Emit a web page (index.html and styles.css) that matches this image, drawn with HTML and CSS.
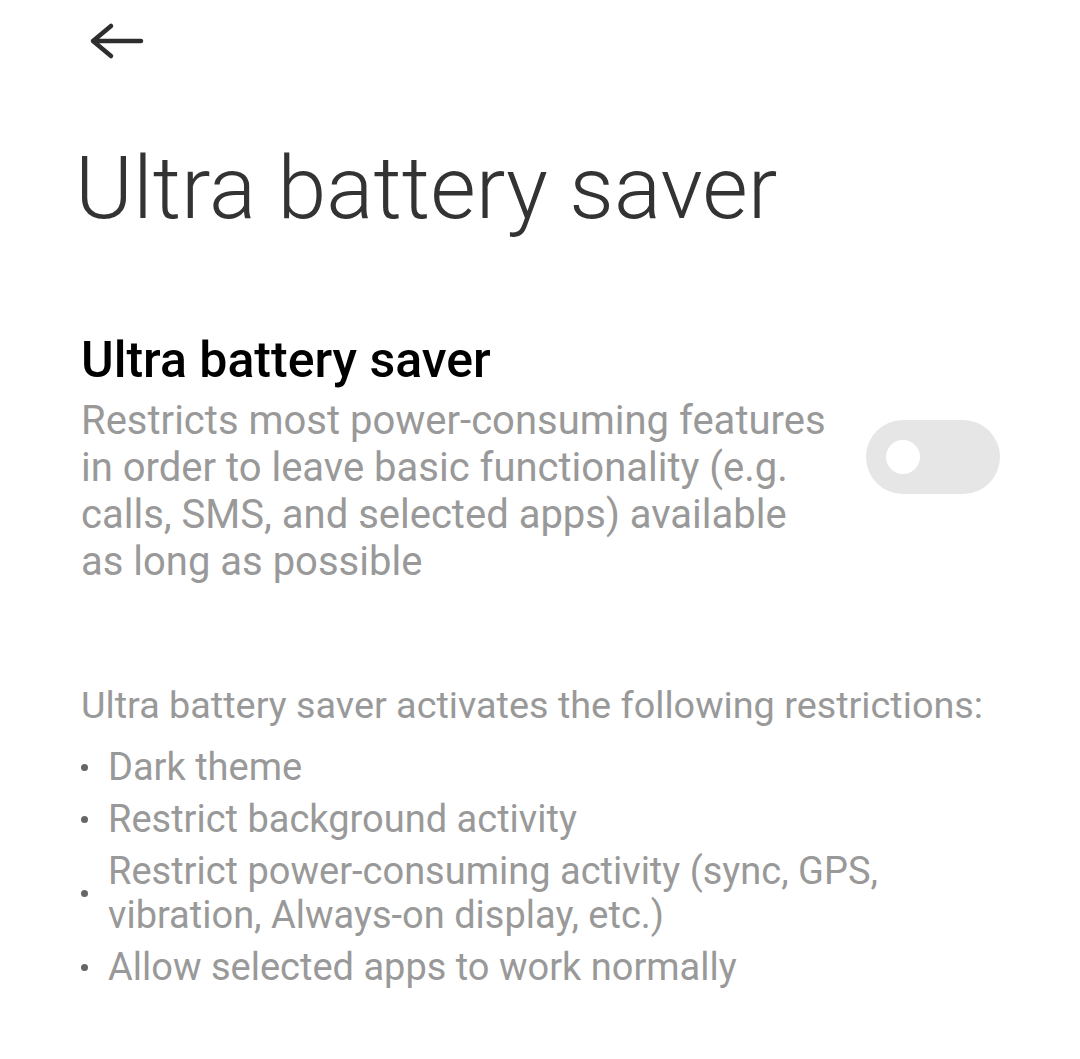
FILE: index.html
```html
<!DOCTYPE html>
<html>
<head>
<meta charset="utf-8">
<link rel="stylesheet" href="styles.css">
</head>
<body>
<div class="page">
  <header class="topbar">
    <svg class="back" width="60" height="40" viewBox="0 0 60 40">
      <path d="M26 5 L8 20 L26 35 M8 20 H56" fill="none" stroke="#2e2e2e" stroke-width="4.5" stroke-linecap="round" stroke-linejoin="round"/>
    </svg>
  </header>
  <h1 class="title">Ultra battery saver</h1>
  <section class="setting">
    <div class="setting-text">
      <h2 class="setting-name">Ultra battery saver</h2>
      <p class="setting-desc">Restricts most power-consuming features in order to leave basic functionality (e.g. calls, SMS, and selected apps) available as long as possible</p>
    </div>
    <div class="toggle"><span class="knob"></span></div>
  </section>
  <section class="info">
    <p class="info-head">Ultra battery saver activates the following restrictions:</p>
    <ul class="list">
      <li class="item"><span class="dot"></span><span class="item-text">Dark theme</span></li>
      <li class="item"><span class="dot"></span><span class="item-text">Restrict background activity</span></li>
      <li class="item"><span class="dot"></span><span class="item-text">Restrict power-consuming activity (sync, GPS,<br>vibration, Always-on display, etc.)</span></li>
      <li class="item"><span class="dot"></span><span class="item-text">Allow selected apps to work normally</span></li>
    </ul>
  </section>
</div>
</body>
</html>
```
FILE: styles.css
```css
* { box-sizing: border-box; }
html, body { margin: 0; padding: 0; background: #fff; }
body { font-family: Roboto, "Noto Sans", sans-serif; width: 1080px; height: 1059px; overflow: hidden; }
.page { padding: 0 80px 0 81px; }
.topbar { height: 86px; display: flex; align-items: flex-start; padding-top: 21px; margin-left: 4px; }
.back { display: block; }
.title { margin: 52px 0 0 -6px; font-weight: 300; font-size: 88px; line-height: 100px; color: #333; letter-spacing: 0; }
.setting { display: flex; align-items: center; justify-content: space-between; margin-top: 90px; }
.setting-text { width: 752px; }
.setting-name { margin: 0 0 5px 0; font-weight: 500; font-size: 50px; line-height: 64px; color: #000; }
.setting-desc { margin: 0; font-size: 40px; line-height: 47px; color: #999; }
.toggle { width: 134px; height: 74px; border-radius: 37px; background: #e6e6e6; display: flex; align-items: center; padding-left: 20px; }
.knob { width: 34px; height: 34px; border-radius: 50%; background: #fff; }
.info { margin-top: 97px; }
.info-head { margin: 0; font-size: 37.8px; line-height: 47px; color: #999; }
.list { list-style: none; margin: 16px 0 0 0; padding: 0; }
.item { display: flex; align-items: center; margin-bottom: 8px; }
.dot { width: 7px; height: 7px; border-radius: 50%; background: #666; margin: 0 20px 0 0; flex: none; }
.item-text { font-size: 38px; line-height: 44px; color: #999; }
```
